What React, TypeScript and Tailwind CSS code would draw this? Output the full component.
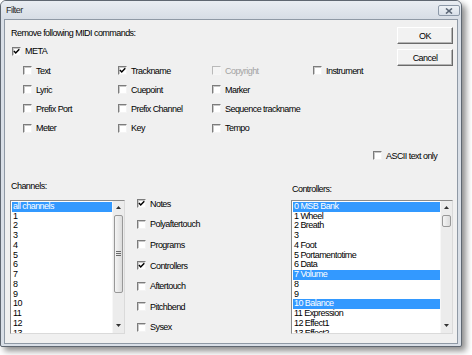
import React from "react";

function Box({ checked, disabled }: { checked?: boolean; disabled?: boolean }) {
  return (
    <span
      className={`relative inline-block w-[9px] h-[9px] shrink-0 border ${
        disabled
          ? "border-t-[#b9b9b9] border-l-[#b9b9b9] border-r-[#f6f6f6] border-b-[#f6f6f6] bg-[#f4f4f4]"
          : "border-t-[#7c7c7c] border-l-[#7c7c7c] border-r-[#f4f4f4] border-b-[#f4f4f4] bg-white shadow-[inset_1px_1px_0_#c8c8c8]"
      }`}
    >
      {checked && (
        <svg className="absolute left-0 top-0" width="7" height="7" viewBox="0 0 7 7">
          <path d="M0.9 3.1 L2.7 5 L6.3 1.2" fill="none" stroke="#000" strokeWidth="1.5" />
        </svg>
      )}
    </span>
  );
}

function CB({
  label,
  checked,
  disabled,
  className = "",
}: {
  label: string;
  checked?: boolean;
  disabled?: boolean;
  className?: string;
}) {
  return (
    <div className={`flex items-center ${className}`}>
      <Box checked={checked} disabled={disabled} />
      <span className={`ml-[4px] whitespace-nowrap ${disabled ? "text-[#a3a3a3]" : "text-black"}`}>{label}</span>
    </div>
  );
}

function Arrow({ up }: { up?: boolean }) {
  return (
    <div className="h-[14px] flex items-center justify-center">
      <svg width="5" height="3" viewBox="0 0 5 3">
        <path d={up ? "M0 3 L2.5 0 L5 3 Z" : "M0 0 L5 0 L2.5 3 Z"} fill="#333" />
      </svg>
    </div>
  );
}

function ScrollBar({ thumbH, grip }: { thumbH: number; grip?: boolean }) {
  return (
    <div className="w-[12px] flex flex-col bg-[#ececec] border-l border-[#f7f7f7]">
      <Arrow up />
      <div className="flex-1 flex flex-col px-[1px]">
        <div
          className="rounded-[2px] border border-[#989898] bg-gradient-to-r from-[#f4f4f4] to-[#dcdcdc] flex items-center justify-center"
          style={{ height: thumbH }}
        >
          {grip && (
            <svg width="5" height="5" viewBox="0 0 5 5">
              <path d="M0 0.5 H5 M0 2.5 H5 M0 4.5 H5" stroke="#6a6a6a" strokeWidth="1" />
            </svg>
          )}
        </div>
      </div>
      <Arrow />
    </div>
  );
}

function ListBox({
  items,
  selected,
  thumbH,
  grip,
  className = "",
}: {
  items: string[];
  selected: number[];
  thumbH: number;
  grip?: boolean;
  className?: string;
}) {
  return (
    <div
      className={`flex h-[134px] border border-t-[#8a8a8a] border-l-[#8a8a8a] border-r-[#dadada] border-b-[#dadada] bg-white overflow-hidden ${className}`}
    >
      <div className="flex-1 pt-[1px] pl-[1px] overflow-hidden">
        {items.map((it, i) => (
          <div
            key={i}
            className={`h-[9.75px] leading-[9.75px] pl-[1px] whitespace-nowrap ${
              selected.includes(i) ? "bg-[#3399ff] text-white" : "text-black"
            }`}
          >
            {it}
          </div>
        ))}
      </div>
      <ScrollBar thumbH={thumbH} grip={grip} />
    </div>
  );
}

function Btn({ label }: { label: string }) {
  return (
    <div className="w-[56px] h-[17px] flex items-center justify-center border border-t-white border-l-white border-r-[#6a6a6a] border-b-[#6a6a6a] bg-[#f2f2f2] shadow-[inset_-1px_-1px_0_#b4b4b4]">
      {label}
    </div>
  );
}

export default function App() {
  const channels = ["all channels", ...Array.from({ length: 13 }, (_, i) => String(i + 1))];
  const controllers = [
    "0 MSB Bank",
    "1 Wheel",
    "2 Breath",
    "3",
    "4 Foot",
    "5 Portamentotime",
    "6 Data",
    "7 Volume",
    "8",
    "9",
    "10 Balance",
    "11 Expression",
    "12 Effect1",
    "13 Effect2",
  ];
  return (
    <div className="w-[472px] h-[355px] bg-white font-['Liberation_Sans',Arial,sans-serif] text-[9px] tracking-[-0.55px] text-black leading-[12px]">
      <div className="w-[462px] h-[347px] flex flex-col border border-[#5f6771] rounded-t-[6px] rounded-b-[2px] bg-[#d9dfe7] shadow-[4px_4px_6px_rgba(0,0,0,0.45)]">
        <div className="h-[18px] flex items-start rounded-t-[5px] bg-gradient-to-b from-[#e9edf2] to-[#d7dde5]">
          <span className="pl-[5px] pt-[3px] text-[#2a2a2a]">Filter</span>
          <div className="ml-auto mr-[1px] mt-[4px] w-[22px] h-[11px] rounded-[2px] border border-[#8d99a8] bg-gradient-to-b from-[#eef2f6] to-[#d8dfe8] flex items-center justify-center">
            <svg width="8" height="6" viewBox="0 0 8 6">
              <path d="M1 0.5 L7 5.5 M7 0.5 L1 5.5" stroke="#5b6675" strokeWidth="1.6" />
            </svg>
          </div>
        </div>
        <div className="mx-[3px] mb-[2px] flex-1 border border-[#8f99a5] bg-[#f0f0f0] flex flex-col">
          <div className="flex">
            <div className="flex-1 pl-[6px] pt-[7px] flex flex-col">
              <div className="h-[12px]">Remove following MIDI commands:</div>
              <CB className="h-[12px] mt-[6px] ml-[1px]" label="META" checked />
              <div className="ml-[12px] mt-[4px] grid grid-cols-[95px_94px_101px_auto] auto-rows-[19.2px] items-center">
                <CB label="Text" />
                <CB label="Trackname" checked />
                <CB label="Copyright" disabled />
                <CB label="Instrument" />
                <CB label="Lyric" />
                <CB label="Cuepoint" />
                <CB label="Marker" />
                <div />
                <CB label="Prefix Port" />
                <CB label="Prefix Channel" />
                <CB label="Sequence trackname" />
                <div />
                <CB label="Meter" />
                <CB label="Key" />
                <CB label="Tempo" />
                <div />
              </div>
            </div>
            <div className="pr-[4px] pt-[7px] flex flex-col gap-[5px]">
              <Btn label="OK" />
              <Btn label="Cancel" />
            </div>
          </div>
          <CB className="h-[12px] mt-[12px] ml-[368px]" label="ASCII text only" />
          <div className="flex mt-[18px] pl-[5px] pr-[4px]">
            <div className="w-[115px] flex flex-col">
              <div className="h-[12px] pl-[1px]">Channels:</div>
              <ListBox className="mt-[8px]" items={channels} selected={[0]} thumbH={78} grip />
            </div>
            <div className="ml-[12px] mt-[13.7px] flex flex-col">
              {["Notes", "Polyaftertouch", "Programs", "Controllers", "Aftertouch", "Pitchbend", "Sysex"].map(
                (l) => (
                  <CB
                    key={l}
                    className="h-[20.6px]"
                    label={l}
                    checked={l === "Notes" || l === "Controllers"}
                  />
                )
              )}
            </div>
            <div className="ml-auto w-[162px] flex flex-col">
              <div className="h-[12px] mt-[3px] pl-[1px]">Controllers:</div>
              <ListBox className="mt-[5px]" items={controllers} selected={[0, 7, 10]} thumbH={12} />
            </div>
          </div>
        </div>
      </div>
    </div>
  );
}
